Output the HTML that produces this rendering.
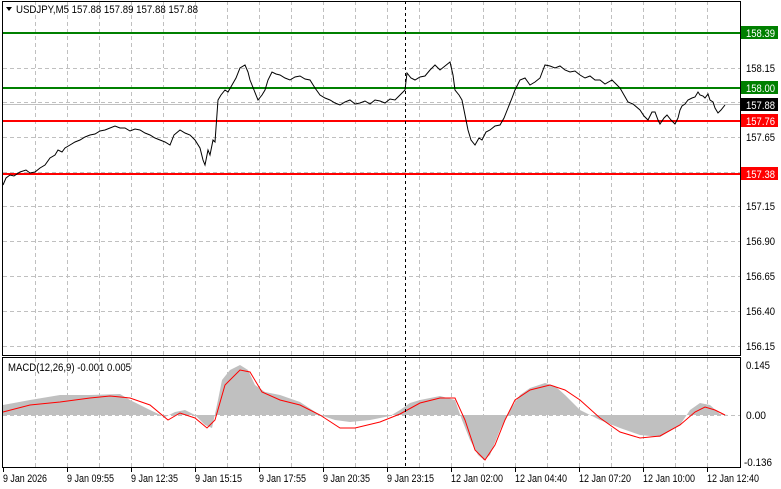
<!DOCTYPE html>
<html><head><meta charset="utf-8"><style>
html,body{margin:0;padding:0;background:#fff;width:781px;height:489px;overflow:hidden}
svg{display:block;font-family:"Liberation Sans",sans-serif;font-size:11px}
</style></head><body>
<svg width="781" height="489" viewBox="0 0 781 489">
<rect width="781" height="489" fill="#fff"/>
<g stroke="#c0c0c0" stroke-dasharray="4,3" stroke-width="1">
<line x1="35.5" y1="1" x2="35.5" y2="468"/><line x1="67.5" y1="1" x2="67.5" y2="468"/><line x1="99.5" y1="1" x2="99.5" y2="468"/><line x1="131.5" y1="1" x2="131.5" y2="468"/><line x1="163.5" y1="1" x2="163.5" y2="468"/><line x1="195.5" y1="1" x2="195.5" y2="468"/><line x1="227.5" y1="1" x2="227.5" y2="468"/><line x1="259.5" y1="1" x2="259.5" y2="468"/><line x1="291.5" y1="1" x2="291.5" y2="468"/><line x1="323.5" y1="1" x2="323.5" y2="468"/><line x1="355.5" y1="1" x2="355.5" y2="468"/><line x1="387.5" y1="1" x2="387.5" y2="468"/><line x1="419.5" y1="1" x2="419.5" y2="468"/><line x1="451.5" y1="1" x2="451.5" y2="468"/><line x1="483.5" y1="1" x2="483.5" y2="468"/><line x1="515.5" y1="1" x2="515.5" y2="468"/><line x1="547.5" y1="1" x2="547.5" y2="468"/><line x1="579.5" y1="1" x2="579.5" y2="468"/><line x1="611.5" y1="1" x2="611.5" y2="468"/><line x1="643.5" y1="1" x2="643.5" y2="468"/><line x1="675.5" y1="1" x2="675.5" y2="468"/><line x1="707.5" y1="1" x2="707.5" y2="468"/>
<line x1="3" y1="33.5" x2="740" y2="33.5"/><line x1="3" y1="68.5" x2="740" y2="68.5"/><line x1="3" y1="102.5" x2="740" y2="102.5"/><line x1="3" y1="137.5" x2="740" y2="137.5"/><line x1="3" y1="172.5" x2="740" y2="172.5"/><line x1="3" y1="206.5" x2="740" y2="206.5"/><line x1="3" y1="241.5" x2="740" y2="241.5"/><line x1="3" y1="276.5" x2="740" y2="276.5"/><line x1="3" y1="311.5" x2="740" y2="311.5"/><line x1="3" y1="346.5" x2="740" y2="346.5"/>
<line x1="3" y1="415.5" x2="740" y2="415.5"/>
</g>
<line x1="3" y1="104.5" x2="740" y2="104.5" stroke="#c0c0c0"/>
<line x1="3" y1="33" x2="740" y2="33" stroke="#008000" stroke-width="2"/>
<line x1="3" y1="88" x2="740" y2="88" stroke="#008000" stroke-width="2"/>
<line x1="3" y1="121" x2="740" y2="121" stroke="#ff0000" stroke-width="2"/>
<line x1="3" y1="174" x2="740" y2="174" stroke="#ff0000" stroke-width="2"/>
<polyline fill="none" stroke="#000" stroke-width="1" points="3,185 6,178 10,175 14,176 20,172 26,170 30,173 35,172 40,168 45,165 50,158 55,155 58,150 62,152 65,148 70,145 75,142 80,140 85,137 90,135 95,134 100,131 105,130 110,128 115,126 120,128 125,128 130,131 135,129 140,130 145,133 150,135 155,138 160,140 165,142 170,145 174,135 180,130 185,133 190,135 195,140 200,148 203,160 205,165 208,150 210,155 213,140 215,142 218,100 221,95 225,90 228,92 232,85 236,78 240,68 245,65 248,72 250,80 254,90 258,100 262,95 265,90 268,80 272,72 276,74 280,75 285,78 290,80 295,77 300,76 305,79 310,80 315,88 320,95 325,98 330,100 335,103 340,105 345,102 350,100 355,104 360,103 365,101 370,104 375,100 380,101 385,103 390,99 395,100 400,95 405,90 407,73 411,78 415,80 420,77 425,76 430,70 435,65 440,70 445,66 450,62 453,75 455,90 459,95 462,100 465,115 468,130 471,140 475,145 479,138 482,140 486,132 490,130 495,126 500,125 504,118 508,108 512,98 515,90 518,84 520,80 525,78 530,85 535,82 540,78 543,70 545,65 550,66 555,68 560,66 565,70 570,72 575,71 580,75 585,78 590,76 595,80 600,80 605,84 612,80 616,84 620,88 624,95 628,102 633,104 640,110 644,116 648,120 652,112 655,112 658,120 660,124 664,118 667,115 671,120 675,124 678,118 680,110 682,106 685,104 688,100 692,98 695,97 698,92 700,95 703,96 705,98 708,94 710,100 713,102 715,108 718,113 721,110 725,105"/>
<polygon fill="#c0c0c0" points="3,415 3,405 30,400 60,395 90,395 120,394 130,400 150,410 165,417 175,412 185,410 195,415 205,425 212,428 218,400 222,380 230,370 240,365 248,370 255,385 265,392 280,395 300,402 320,415 335,420 350,422 370,420 390,416 400,410 410,403 420,400 440,396 455,400 462,420 470,440 478,455 484,460 490,455 500,430 510,410 520,395 530,388 545,383 555,386 565,395 580,410 600,420 620,428 640,435 660,437 680,425 690,410 700,403 710,405 720,414 728,415"/>
<polyline fill="none" stroke="#ff0000" stroke-width="1" points="3,412 30,405 60,402 90,398 110,396 130,398 150,405 168,420 180,413 195,418 207,428 215,420 225,385 240,370 250,372 262,392 280,400 300,405 320,415 340,428 355,428 380,422 400,414 420,403 440,398 455,398 465,420 475,450 485,460 495,445 505,420 515,400 530,390 550,385 565,390 580,400 600,418 620,432 640,438 660,436 680,425 695,412 705,407 715,410 725,415"/>
<line x1="405.5" y1="1" x2="405.5" y2="468" stroke="#000" stroke-dasharray="3,3"/>
<rect x="2.5" y="1.5" width="738" height="354" fill="none" stroke="#000"/>
<rect x="2.5" y="357.5" width="738" height="110" fill="none" stroke="#000"/>
<path d="M6,7 L12,7 L9,11 Z" fill="#000"/>
<text x="16" y="13" fill="#000" textLength="182" lengthAdjust="spacingAndGlyphs">USDJPY,M5  157.88 157.89 157.88 157.88</text>
<text x="8" y="371" fill="#000" textLength="123" lengthAdjust="spacingAndGlyphs">MACD(12,26,9) -0.001 0.005</text>
<g fill="#000">
<text x="746" y="72" textLength="29" lengthAdjust="spacingAndGlyphs">158.15</text><text x="746" y="141" textLength="29" lengthAdjust="spacingAndGlyphs">157.65</text><text x="746" y="210" textLength="29" lengthAdjust="spacingAndGlyphs">157.15</text><text x="746" y="245" textLength="29" lengthAdjust="spacingAndGlyphs">156.90</text><text x="746" y="280" textLength="29" lengthAdjust="spacingAndGlyphs">156.65</text><text x="746" y="315" textLength="29" lengthAdjust="spacingAndGlyphs">156.40</text><text x="746" y="350" textLength="29" lengthAdjust="spacingAndGlyphs">156.15</text>
<text x="746" y="369" textLength="24" lengthAdjust="spacingAndGlyphs">0.145</text><text x="746" y="419" textLength="20" lengthAdjust="spacingAndGlyphs">0.00</text><text x="744" y="466" textLength="28" lengthAdjust="spacingAndGlyphs">-0.136</text>
</g>
<rect x="741" y="26" width="37" height="13" fill="#008000"/><text x="746" y="37" fill="#fff" textLength="29" lengthAdjust="spacingAndGlyphs">158.39</text>
<rect x="741" y="81" width="37" height="13" fill="#008000"/><text x="746" y="92" fill="#fff" textLength="29" lengthAdjust="spacingAndGlyphs">158.00</text>
<rect x="741" y="98" width="37" height="13" fill="#000"/><text x="746" y="109" fill="#fff" textLength="29" lengthAdjust="spacingAndGlyphs">157.88</text>
<rect x="741" y="114" width="37" height="13" fill="#ff0000"/><text x="746" y="125" fill="#fff" textLength="29" lengthAdjust="spacingAndGlyphs">157.76</text>
<rect x="741" y="167" width="37" height="13" fill="#ff0000"/><text x="746" y="178" fill="#fff" textLength="29" lengthAdjust="spacingAndGlyphs">157.38</text>
<g fill="#000">
<text x="3" y="482" textLength="44" lengthAdjust="spacingAndGlyphs">9 Jan 2026</text><text x="67" y="482" textLength="47" lengthAdjust="spacingAndGlyphs">9 Jan 09:55</text><text x="131" y="482" textLength="47" lengthAdjust="spacingAndGlyphs">9 Jan 12:35</text><text x="195" y="482" textLength="47" lengthAdjust="spacingAndGlyphs">9 Jan 15:15</text><text x="259" y="482" textLength="47" lengthAdjust="spacingAndGlyphs">9 Jan 17:55</text><text x="323" y="482" textLength="47" lengthAdjust="spacingAndGlyphs">9 Jan 20:35</text><text x="387" y="482" textLength="47" lengthAdjust="spacingAndGlyphs">9 Jan 23:15</text><text x="451" y="482" textLength="52" lengthAdjust="spacingAndGlyphs">12 Jan 02:00</text><text x="515" y="482" textLength="52" lengthAdjust="spacingAndGlyphs">12 Jan 04:40</text><text x="579" y="482" textLength="52" lengthAdjust="spacingAndGlyphs">12 Jan 07:20</text><text x="643" y="482" textLength="52" lengthAdjust="spacingAndGlyphs">12 Jan 10:00</text><text x="707" y="482" textLength="52" lengthAdjust="spacingAndGlyphs">12 Jan 12:40</text>
</g>
<g stroke="#000"><line x1="3.5" y1="468" x2="3.5" y2="472"/><line x1="67.5" y1="468" x2="67.5" y2="472"/><line x1="131.5" y1="468" x2="131.5" y2="472"/><line x1="195.5" y1="468" x2="195.5" y2="472"/><line x1="259.5" y1="468" x2="259.5" y2="472"/><line x1="323.5" y1="468" x2="323.5" y2="472"/><line x1="387.5" y1="468" x2="387.5" y2="472"/><line x1="451.5" y1="468" x2="451.5" y2="472"/><line x1="515.5" y1="468" x2="515.5" y2="472"/><line x1="579.5" y1="468" x2="579.5" y2="472"/><line x1="643.5" y1="468" x2="643.5" y2="472"/><line x1="707.5" y1="468" x2="707.5" y2="472"/></g>
</svg>
</body></html>
